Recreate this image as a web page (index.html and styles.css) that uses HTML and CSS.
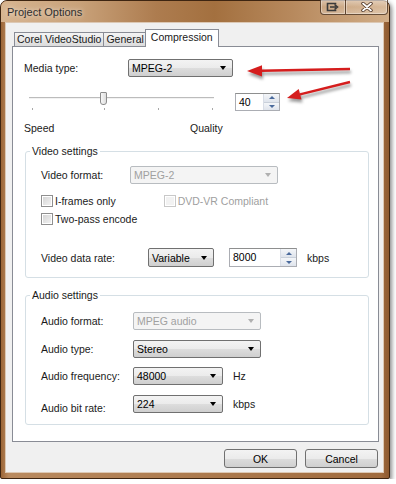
FILE: index.html
```html
<!DOCTYPE html>
<html lang="en">
<head>
    <meta charset="UTF-8">
    <title>Project Options</title>
    <link rel="stylesheet" href="styles.css">
</head>
<body>
    <div class="window">
        <div class="titlebar">
            <span class="title">Project Options</span>
            <div class="caption-btns">
                <div class="cap-btn cap-tray">
                    <svg width="14" height="10" viewBox="0 0 14 10">
                        <path d="M9.5 2.5V1.5H1.5V8.5H9.5V7.5" fill="none" stroke="#3a3a3a" stroke-width="1.6"/>
                        <path d="M4 5H10M8.5 2.5L11.5 5L8.5 7.5" fill="none" stroke="#3a3a3a" stroke-width="1.6"/>
                    </svg>
                </div>
                <div class="cap-btn cap-close">
                    <svg width="12" height="10" viewBox="0 0 12 10">
                        <path d="M2 1.5L10 8.5M10 1.5L2 8.5" stroke="#4a3020" stroke-width="3.4" stroke-linecap="round"/>
                        <path d="M2 1.5L10 8.5M10 1.5L2 8.5" stroke="#ffffff" stroke-width="1.8" stroke-linecap="round"/>
                    </svg>
                </div>
            </div>
        </div>

        <div class="client">
            <div class="tabs">
                <div class="tab">Corel VideoStudio</div>
                <div class="tab">General</div>
                <div class="tab tab-active">Compression</div>
            </div>

            <div class="panel">
                <div class="row media-row">
                    <span class="media-label">Media type:</span>
                    <div class="combo media-combo"><span>MPEG-2</span><i class="caret"></i></div>
                </div>

                <div class="row slider-row">
                    <div class="slider">
                        <div class="slider-track"></div>
                        <div class="slider-thumb"></div>
                        <div class="slider-ticks"><i></i><i></i><i></i><i></i></div>
                    </div>
                    <div class="spin quality-spin">
                        <span class="spin-value">40</span>
                        <div class="spin-btns"><i class="spin-up"></i><i class="spin-down"></i></div>
                    </div>
                </div>

                <div class="scale-labels">
                    <span>Speed</span>
                    <span>Quality</span>
                </div>

                <fieldset class="group video-group">
                    <legend>Video settings</legend>
                    <div class="row">
                        <span class="video-label">Video format:</span>
                        <div class="combo combo-disabled format-combo"><span>MPEG-2</span><i class="caret"></i></div>
                    </div>
                    <div class="check-row first-check">
                        <label class="check"><i class="check-box"></i>I-frames only</label>
                        <label class="check check-disabled dvd-check"><i class="check-box"></i>DVD-VR Compliant</label>
                    </div>
                    <div class="check-row">
                        <label class="check"><i class="check-box"></i>Two-pass encode</label>
                    </div>
                    <div class="row rate-row">
                        <span class="rate-label">Video data rate:</span>
                        <div class="combo rate-combo"><span>Variable</span><i class="caret"></i></div>
                        <div class="spin rate-spin">
                            <span class="spin-value">8000</span>
                            <div class="spin-btns"><i class="spin-up"></i><i class="spin-down"></i></div>
                        </div>
                        <span class="unit rate-unit">kbps</span>
                    </div>
                </fieldset>

                <fieldset class="group audio-group">
                    <legend>Audio settings</legend>
                    <div class="row">
                        <span class="audio-label">Audio format:</span>
                        <div class="combo combo-disabled audio-wide"><span>MPEG audio</span><i class="caret"></i></div>
                    </div>
                    <div class="row audio-row">
                        <span class="audio-label">Audio type:</span>
                        <div class="combo audio-wide"><span>Stereo</span><i class="caret"></i></div>
                    </div>
                    <div class="row audio-row">
                        <span class="audio-label">Audio frequency:</span>
                        <div class="combo audio-narrow"><span>48000</span><i class="caret"></i></div>
                        <span class="unit">Hz</span>
                    </div>
                    <div class="row audio-row">
                        <span class="audio-label bitrate-label">Audio bit rate:</span>
                        <div class="combo audio-narrow"><span>224</span><i class="caret"></i></div>
                        <span class="unit">kbps</span>
                    </div>
                </fieldset>
            </div>

            <div class="dialog-btns">
                <button class="btn">OK</button>
                <button class="btn">Cancel</button>
            </div>
        </div>

        <svg class="arrows" width="390" height="479" viewBox="0 0 390 479">
            <path d="M350 69L261 70.7" stroke="#d51d1d" stroke-width="2.4"/>
            <polygon points="247,71 262,65.2 262,76.4" fill="#d51d1d"/>
            <path d="M350 82L300 94.3" stroke="#d51d1d" stroke-width="2.4"/>
            <polygon points="287,98 301.5,99.6 298.7,88.9" fill="#d51d1d"/>
        </svg>
    </div>
</body>
</html>
```

FILE: styles.css
```css
body {
    margin: 0;
    background-color: #ffffff;
    font-family: "Liberation Sans", Arial, sans-serif;
    font-size: 10.5px;
    color: #1a1a1a;
}
.window {
    position: relative;
    width: 390px;
    height: 479px;
    box-sizing: border-box;
    border: 1px solid #3e2511;
    border-radius: 7px 7px 2px 2px;
    background: linear-gradient(90deg, #9c6638, #b98a5f 2%, #a06b3e 98%, #8e5a30);
    box-shadow: 2px 2px 4px rgba(0, 0, 0, 0.45);
    display: flex;
    flex-direction: column;
}
.titlebar {
    height: 21px;
    flex: none;
    display: flex;
    align-items: flex-start;
    border-radius: 6px 6px 0 0;
    background: linear-gradient(90deg, #d7b591 0%, #c9a27a 20%, #ad7c4f 40%, #a3703f 55%, #b7895d 75%, #d2ae88 100%);
}
.title {
    line-height: 22px;
    padding-left: 6px;
    font-size: 11px;
    color: #2e2e2e;
    text-shadow: 0 0 5px rgba(255, 255, 255, 0.8);
}
.caption-btns {
    display: flex;
    margin-left: auto;
    margin-right: 1px;
    margin-top: -1px;
}
.cap-btn {
    height: 15px;
    box-sizing: border-box;
    border: 1px solid rgba(60, 35, 15, 0.75);
    border-top: none;
    display: flex;
    align-items: center;
    justify-content: center;
    background: linear-gradient(rgba(255, 255, 255, 0.45), rgba(255, 255, 255, 0.15) 50%, rgba(255, 255, 255, 0.3));
    box-shadow: inset 0 0 0 1px rgba(255, 255, 255, 0.35);
}
.cap-tray {
    width: 26px;
    border-radius: 0 0 0 4px;
}
.cap-close {
    width: 42px;
    border-left: none;
    border-radius: 0 0 4px 0;
}
.client {
    flex: 1;
    margin: 0 5px 5px 4px;
    border: 1px solid #dcc8b4;
    background-color: #f0f0f0;
    padding: 6px 4px 0 6px;
    display: flex;
    flex-direction: column;
}
.tabs {
    display: flex;
    align-items: flex-end;
    height: 17px;
    padding-left: 2px;
    position: relative;
    z-index: 1;
}
.tab {
    height: 14px;
    box-sizing: border-box;
    border: 1px solid #898c95;
    border-bottom: none;
    padding: 0 2px;
    line-height: 13px;
    background: linear-gradient(#f4f4f4, #e8e8e8 50%, #dcdcdc);
    margin-right: -1px;
}
.tab-active {
    height: 18px;
    margin-bottom: -1px;
    margin-left: -1px;
    padding: 0 5px;
    line-height: 15px;
    background: #ffffff;
}
.panel {
    width: 367px;
    height: 396px;
    box-sizing: border-box;
    border: 1px solid #898c95;
    background-color: #ffffff;
    padding: 12px 0 0 11px;
}
.row {
    display: flex;
    align-items: center;
    height: 18px;
}
.media-label {
    width: 104px;
}
.combo {
    display: flex;
    align-items: center;
    justify-content: space-between;
    height: 18px;
    box-sizing: border-box;
    border: 1px solid #707070;
    border-radius: 2px;
    padding: 0 6px 0 3px;
    background: linear-gradient(#f3f3f3, #ebebeb 50%, #dddddd 51%, #cfcfcf);
    color: #000000;
}
.caret {
    width: 0;
    height: 0;
    border-left: 3.5px solid transparent;
    border-right: 3.5px solid transparent;
    border-top: 4px solid #000000;
}
.combo-disabled {
    border-color: #b8bcc0;
    background: #f4f4f4;
    color: #a0a0a0;
}
.combo-disabled .caret {
    border-top-color: #b0b0b0;
}
.media-combo {
    width: 105px;
}
.slider-row {
    margin-top: 16px;
}
.slider {
    position: relative;
    width: 185px;
    height: 18px;
    margin-left: 5px;
}
.slider-track {
    margin-top: 4px;
    height: 1px;
    background-color: #bcbcbc;
    border-bottom: 1px solid #f2f2f2;
}
.slider-thumb {
    position: absolute;
    left: 71px;
    top: -1px;
    width: 5px;
    height: 11px;
    border: 1px solid #8c8c8c;
    border-radius: 1px 1px 3px 3px;
    background: linear-gradient(90deg, #f7f7f7, #dedede);
}
.slider-ticks {
    display: flex;
    margin-top: 9px;
}
.slider-ticks i {
    width: 1px;
    height: 2px;
    background-color: #a8a8a8;
}
.slider-ticks i:nth-child(1) { margin-left: 3px; }
.slider-ticks i:nth-child(2) { margin-left: 71px; }
.slider-ticks i:nth-child(3) { margin-left: 53px; }
.slider-ticks i:nth-child(4) { margin-left: 53px; }
.spin {
    display: flex;
    height: 18px;
    box-sizing: border-box;
    border: 1px solid #abadb3;
    border-top-color: #8e8f8f;
    background-color: #ffffff;
    color: #000000;
}
.spin-value {
    flex: 1;
    padding-left: 3px;
    line-height: 16px;
}
.spin-btns {
    width: 15px;
    display: flex;
    flex-direction: column;
    border-left: 1px solid #d8dde6;
}
.spin-btns i {
    flex: 1;
    display: flex;
    align-items: center;
    justify-content: center;
    background: linear-gradient(#f4f6f9, #dfe4ec);
}
.spin-up {
    border-bottom: 1px solid #c9d0da;
}
.spin-up::after, .spin-down::after {
    content: "";
    border-left: 3px solid transparent;
    border-right: 3px solid transparent;
}
.spin-up::after {
    border-bottom: 3px solid #4a6a9c;
}
.spin-down::after {
    border-top: 3px solid #4a6a9c;
}
.quality-spin {
    width: 45px;
    margin-left: 21px;
}
.scale-labels {
    display: grid;
    grid-template-columns: 166px auto;
    margin-top: 10px;
    line-height: 14px;
}
.group {
    width: 344px;
    box-sizing: border-box;
    margin: 10px 0 0 1px;
    border: 1px solid #d5dfe5;
    border-radius: 3px;
    padding: 8px 0 10px 15px;
}
.group legend {
    padding: 0 2px;
    margin-left: -11px;
    line-height: 13px;
}
.video-label {
    width: 89px;
}
.format-combo {
    width: 148px;
}
.check-row {
    display: flex;
    height: 13px;
    margin-top: 5px;
}
.first-check {
    margin-top: 10px;
}
.check {
    display: flex;
    align-items: center;
    gap: 2px;
}
.check-box {
    width: 12px;
    height: 12px;
    box-sizing: border-box;
    border: 1px solid #8f8f8f;
    background: linear-gradient(135deg, #d2d2d2, #f4f4f4);
    box-shadow: inset 0 0 0 1px #ffffff;
}
.dvd-check {
    margin-left: 48px;
}
.check-disabled {
    color: #a0a0a0;
}
.check-disabled .check-box {
    border-color: #c8c8c8;
    background: #f2f2f2;
}
.rate-row {
    margin-top: 23px;
    height: 19px;
}
.rate-label {
    width: 107px;
}
.rate-combo {
    width: 66px;
    height: 19px;
}
.rate-spin {
    width: 68px;
    height: 19px;
    margin-left: 15px;
}
.rate-unit {
    margin-left: 16px;
}
.audio-group {
    margin-top: 11px;
    padding-top: 10px;
    padding-bottom: 11px;
}
.audio-label {
    width: 92px;
}
.bitrate-label {
    padding-top: 8px;
}
.audio-row {
    margin-top: 9.5px;
}
.audio-wide {
    width: 128px;
}
.audio-narrow {
    width: 90px;
}
.unit {
    margin-left: 10px;
}
.dialog-btns {
    display: flex;
    justify-content: flex-end;
    gap: 8px;
    margin-top: 7px;
    width: 366px;
}
.btn {
    width: 73px;
    height: 19px;
    border: 1px solid #707070;
    border-radius: 3px;
    background: linear-gradient(#f3f3f3, #ebebeb 50%, #dddddd 51%, #cfcfcf);
    font-family: "Liberation Sans", Arial, sans-serif;
    font-size: 10.5px;
    color: #000000;
    padding: 0;
}
.arrows {
    position: absolute;
    left: -1px;
    top: -1px;
    pointer-events: none;
    filter: drop-shadow(1px 3px 1.5px rgba(0, 0, 0, 0.4));
}
```
